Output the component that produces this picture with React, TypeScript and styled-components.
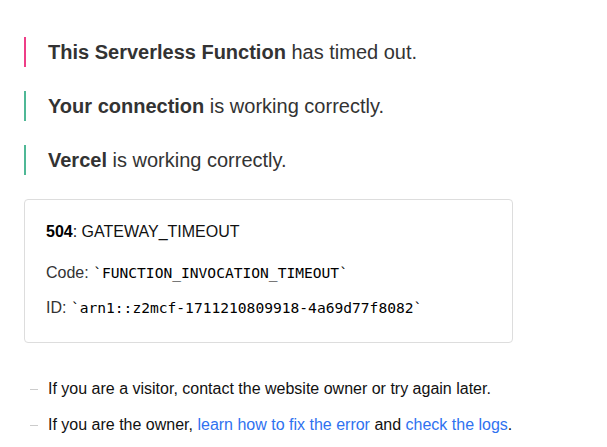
import React from "react";
import styled, { createGlobalStyle } from "styled-components";

const Global = createGlobalStyle`
  html, body { margin: 0; padding: 0; background: #fff; }
  body {
    font-family: "Liberation Sans", Arial, sans-serif;
    color: #333;
    -webkit-font-smoothing: antialiased;
  }
`;

const Main = styled.main`
  padding: 37px 24px 0 24px;
  display: flex;
  flex-direction: column;
`;

const Header = styled.div`
  display: flex;
  flex-direction: column;
  gap: 24px;
  margin-bottom: 24px;
`;

const HeaderItem = styled.div<{ $tone: "error" | "ok" }>`
  border-left: 2px solid ${(p) => (p.$tone === "error" ? "#ee3e87" : "#4fb896")};
  padding-left: 22px;
  font-size: 20px;
  line-height: 30px;
  color: #333;
  b { font-weight: 700; }
`;

const Card = styled.div`
  width: 489px;
  box-sizing: border-box;
  border: 1px solid #ddd;
  border-radius: 4px;
  padding: 20px 21px 21px;
  display: flex;
  flex-direction: column;
  margin-bottom: 34px;
`;

const ErrorCode = styled.p`
  margin: 0 0 16px;
  font-size: 16px;
  line-height: 24px;
  color: #111;
  b { color: #000; }
`;

const DevLine = styled.p`
  margin: 0;
  font-size: 16px;
  line-height: 26px;
  color: #333;
  & + & { margin-top: 9px; }
`;

const Code = styled.code`
  font-family: "DejaVu Sans Mono", "Liberation Mono", monospace;
  font-size: 14.6px;
  color: #000;
`;

const Notes = styled.ul`
  list-style: none;
  margin: 0;
  padding: 0;
  display: flex;
  flex-direction: column;
  gap: 12px;
`;

const Note = styled.li`
  display: flex;
  align-items: center;
  font-size: 16px;
  line-height: 24px;
  color: #111;
  &::before {
    content: "";
    display: block;
    width: 8px;
    height: 1px;
    background: #ccc;
    margin: 0 10px 0 6px;
  }
`;

const Link = styled.a`
  color: #2f72f0;
  text-decoration: none;
`;

export default function App() {
  return (
    <>
      <Global />
      <Main>
        <Header>
          <HeaderItem $tone="error">
            <b>This Serverless Function</b> has timed out.
          </HeaderItem>
          <HeaderItem $tone="ok">
            <b>Your connection</b> is working correctly.
          </HeaderItem>
          <HeaderItem $tone="ok">
            <b>Vercel</b> is working correctly.
          </HeaderItem>
        </Header>
        <Card>
          <ErrorCode>
            <b>504</b>: GATEWAY_TIMEOUT
          </ErrorCode>
          <DevLine>
            Code: <Code>`FUNCTION_INVOCATION_TIMEOUT`</Code>
          </DevLine>
          <DevLine>
            ID: <Code>`arn1::z2mcf-1711210809918-4a69d77f8082`</Code>
          </DevLine>
        </Card>
        <Notes>
          <Note>
            <span>If you are a visitor, contact the website owner or try again later.</span>
          </Note>
          <Note>
            <span>
              If you are the owner, <Link href="#">learn how to fix the error</Link> and{" "}
              <Link href="#">check the logs</Link>.
            </span>
          </Note>
        </Notes>
      </Main>
    </>
  );
}
